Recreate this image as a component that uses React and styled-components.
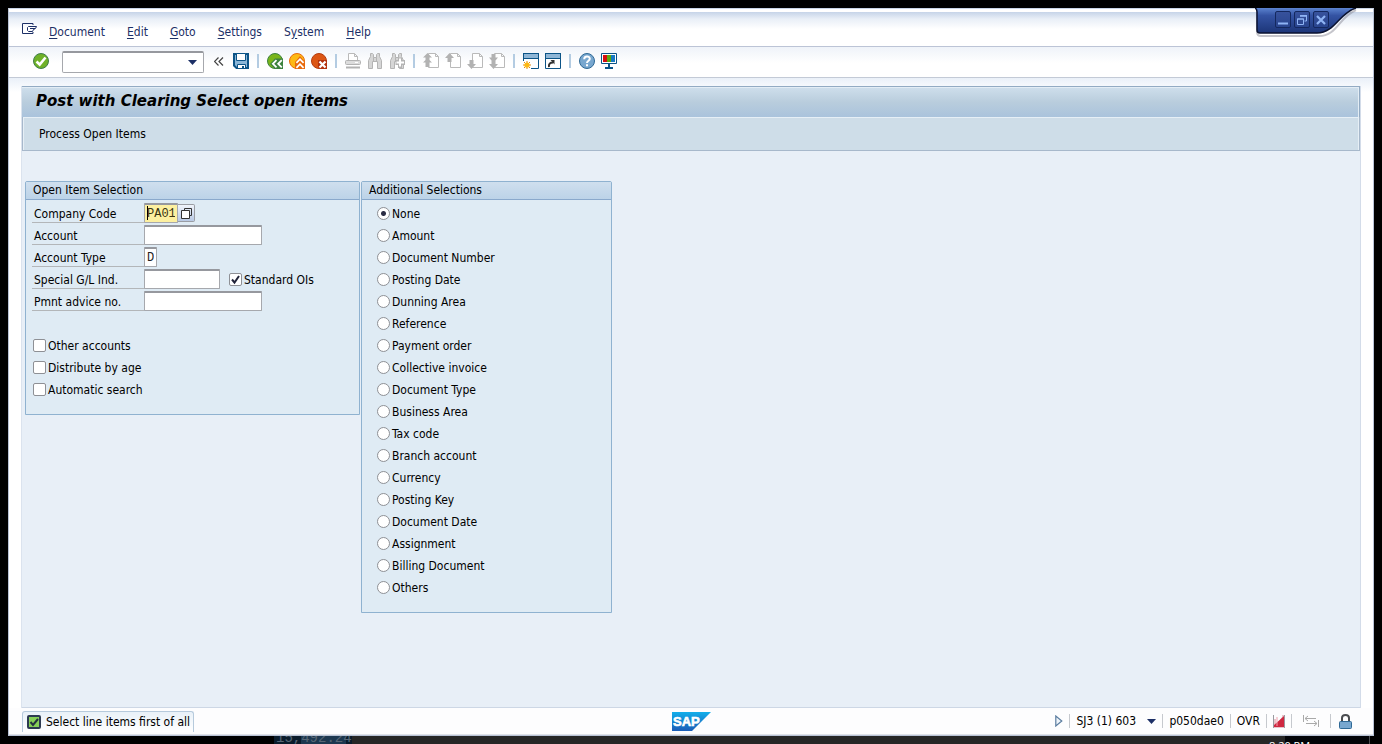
import React from 'react';
import styled, { createGlobalStyle, css } from 'styled-components';

const GlobalStyle = createGlobalStyle`
  *, *::before, *::after { box-sizing: border-box; }
  html, body { margin: 0; padding: 0; background: #000; }
  body, button, input {
    font-family: "DejaVu Sans Condensed", "DejaVu Sans", sans-serif;
    font-size: 12px;
    line-height: 16px;
    color: #000;
  }
`;

const Desktop = styled.div`
  display: flex;
  flex-direction: column;
  min-height: 100vh;
  padding: 8px 8px 0;
`;

const Window = styled.div`
  position: relative;
  flex: 1;
  display: flex;
  flex-direction: column;
  background: #fff;
  border: 1px solid #b9c3d6;
  border-top-color: #c9d4e6;
`;

const WindowControls = styled.div`
  position: absolute;
  top: -1px;
  right: 14px;
  width: 104px;
  height: 30px;
`;

const ControlsShape = styled.svg`
  position: absolute;
  inset: 0;
`;

const ControlButtons = styled.div`
  position: relative;
  display: flex;
  gap: 3px;
  padding: 3px 0 0 20px;
`;

const PlainButton = styled.button`
  display: flex;
  align-items: center;
  justify-content: center;
  padding: 0;
  border: 0;
  background: none;
`;

const ControlButton = styled(PlainButton)`
  width: 16px;
  height: 17px;
  border: 1px solid #14285f;
  border-radius: 2px;
  background: linear-gradient(#37529c, #29458f);
`;

const MenuBar = styled.nav`
  display: flex;
  align-items: center;
  gap: 22px;
  height: 38px;
  padding: 8px 13px 0;
  border-bottom: 1px solid #bcc4d6;
  background: linear-gradient(#fff 0 3px, #c6d4e8 3px, #e9eff7 10px, #fff 20px);
`;

const MenuIcon = styled(PlainButton)`
  width: 15px;
  height: 18px;
  margin-right: -10px;
  align-items: flex-start;
`;

const MenuItem = styled.a`
  color: #1c2f66;
  text-decoration: none;
  u { text-underline-offset: 2px; }
`;

const Toolbar = styled.div`
  display: flex;
  align-items: center;
  gap: 6px;
  height: 31px;
  padding: 0 24px 2px;
  border-bottom: 1px solid #c3cad6;
  background: linear-gradient(#eff3f9, #fff 16px);
`;

const IconButton = styled(PlainButton)`
  flex: none;
  width: 16px;
  height: 16px;
`;

const ToolSeparator = styled.span`
  width: 6px;
  height: 14px;
  background: linear-gradient(#b4cce2, #b4cce2) center / 2px 100% no-repeat;
`;

const CommandField = styled.div`
  display: flex;
  align-items: center;
  width: 142px;
  height: 22px;
  margin: 2px 4px 0 7px;
  padding-right: 6px;
  border: 1px solid #a6a8ad;
  border-top: 2px solid #96989e;
  border-radius: 2px;
  background: #fff;
`;

const CommandInput = styled.input`
  flex: 1;
  min-width: 0;
  border: 0;
  padding: 0 4px;
  outline: 0;
  background: none;
`;

const Collapse = styled(IconButton)`
  width: 10px;
  margin-right: 3px;
`;

const Client = styled.div`
  flex: 1;
  display: flex;
  flex-direction: column;
  padding: 0 13px;
  background: linear-gradient(#eaf0f8, #fff 14px);
`;

const Screen = styled.main`
  flex: 1;
  display: flex;
  flex-direction: column;
  margin-top: 8px;
  border-bottom: 1px solid #cdd7e5;
  background: #e8eff7;
  box-shadow: -1px 0 #dbe3ee, 1px 0 #d3dce9;
`;

const TitleBar = styled.h1`
  margin: 0;
  height: 31px;
  padding: 2px 14px 0;
  border: 1px solid #93abc3;
  border-width: 1px 1px 0 0;
  background: linear-gradient(#cfdfec, #b9cddd 50%, #aac3dc);
  box-shadow: inset -1px 1px #e3edf5;
  font-family: "DejaVu Sans", sans-serif;
  font-size: 15px;
  line-height: 24px;
  font-weight: bold;
  font-style: italic;
`;

const AppToolbar = styled.div`
  display: flex;
  align-items: center;
  height: 34px;
  padding: 0 16px;
  border: 1px solid #a7b8cb;
  border-top: 0;
  background: #cedde8;
  box-shadow: inset 1px 1px #e6eff6, inset -1px 0 #e6eff6;
`;

const Groups = styled.div`
  display: flex;
  align-items: flex-start;
  gap: 1px;
  padding: 30px 3px;
`;

const Group = styled.fieldset`
  width: ${(p) => p.$width}px;
  margin: 0;
  padding: 0 0 14px;
  border: 1px solid #8fb2d0;
  border-radius: 2px 2px 0 0;
  background: #dfebf4;
`;

const GroupTitle = styled.legend`
  float: left;
  width: 100%;
  height: 18px;
  margin-bottom: 2px;
  padding: 0 7px;
  border-bottom: 1px solid #8aa9cc;
  background: linear-gradient(#cfdfee, #bcd3e8);
`;

const GroupRows = styled.div`
  clear: both;
  padding-left: ${(p) => p.$indent}px;
`;

const Row = styled.div`
  display: flex;
  align-items: center;
  height: 22px;
`;

const FieldLabel = styled.label`
  width: 112px;
  height: 20px;
  padding: 3px 2px 0;
  border-bottom: 1px solid #b3b6b9;
`;

const FieldBox = styled.span`
  position: relative;
  display: flex;
`;

const Field = styled.input`
  width: ${(p) => p.$width}px;
  height: 20px;
  padding: 0 2px;
  border: 1px solid #a6a8ad;
  border-top: 2px solid #96989e;
  border-radius: 1px;
  outline: 0;
  background: ${(p) => (p.$active ? '#fdf0a0' : '#fff')};
  color: ${(p) => (p.$active ? '#3a3410' : '#222')};
  font-family: "Liberation Mono", monospace;
`;

const Caret = styled.span`
  position: absolute;
  left: 3px;
  top: 3px;
  width: 1px;
  height: 14px;
  background: #000;
`;

const SearchHelp = styled(PlainButton)`
  width: 17px;
  height: 18px;
  border: 1px solid #9a9da4;
  border-left: 0;
  border-radius: 0 2px 2px 0;
  background: linear-gradient(#f0f4fb, #b9c9e4);
`;

const choice = css`
  appearance: none;
  flex: none;
  width: 13px;
  height: 13px;
  margin: 0;
  border: 1px solid #8e9095;
  background: #fff;
`;

const Checkbox = styled.input.attrs({ type: 'checkbox' })`
  ${choice}
  border-radius: 2px;
  &:checked {
    background: #fff url("data:image/svg+xml,%3Csvg xmlns='http://www.w3.org/2000/svg' viewBox='0 0 11 11'%3E%3Cpath d='M2 5.5L4.5 8.5L9 2' fill='none' stroke='%2322243a' stroke-width='2'/%3E%3C/svg%3E");
  }
`;

const Radio = styled.input.attrs({ type: 'radio' })`
  ${choice}
  border-radius: 50%;
  &:checked { background: radial-gradient(circle, #2b2d45 0 2px, #fff 3px); }
`;

const ChoiceLabel = styled.label`
  display: flex;
  align-items: center;
  gap: 2px;
  height: 22px;
  padding-top: 1px;
  white-space: nowrap;
`;

const InlineChoice = styled.div`
  margin-left: 9px;
`;

const OptionList = styled.div`
  padding-left: 1px;
`;

const StatusBar = styled.footer`
  display: grid;
  grid-template-columns: 1fr auto 1fr;
  align-items: center;
  height: 27px;
  padding: 0 13px;
  border-bottom: 1px solid #dfe2e8;
  background: #fdfdfe;
`;

const Message = styled.div`
  justify-self: start;
  display: flex;
  align-items: center;
  gap: 5px;
  height: 21px;
  padding: 0 3px 0 4px;
  border: 1px solid #b6cadc;
  border-bottom: 0;
  border-radius: 3px 3px 0 0;
  background: linear-gradient(#e9f1f8, #fff);
`;

const SystemInfo = styled.div`
  justify-self: end;
  display: flex;
  align-items: center;
  gap: 6px;
  height: 20px;
  margin-right: 7px;
`;

const InfoSeparator = styled.span`
  width: 1px;
  height: 14px;
  background: #c6c9ce;
`;

const SystemButton = styled(PlainButton)`
  justify-content: space-between;
  width: 80px;
`;

const InfoSlot = styled.span`
  display: flex;
  justify-content: center;
  width: ${(p) => p.$width}px;
`;

const Taskbar = styled.div`
  display: flex;
  height: 8px;
  margin: 0 4px 0 266px;
  overflow: hidden;
  border-right: 1px solid #4a4c50;
  background: #020408;
`;

const TaskAmount = styled.span`
  width: 78px;
  padding-left: 2px;
  background: linear-gradient(90deg, #0a1c2c 27px, #1d3850 27px 72px, #0a1c2c 72px);
  color: #566675;
  font: 14px/4px "Liberation Mono", monospace;
`;

const TaskStrip = styled.span`
  flex: 1;
  background: #262626;
`;

const TaskClock = styled.span`
  width: 100px;
  margin-left: -16px;
  color: #fff;
  font: 11px/20px "Open Sans", sans-serif;
`;

const Svg = ({ w = 16, h = 16, children }) => (
  <svg width={w} height={h} viewBox={`0 0 ${w} ${h}`} fill="none" aria-hidden="true">{children}</svg>
);

const Triangle = () => <Svg w={9} h={5}><path d="M0 0h9L4.500 5z" fill="#1c2f66" /></Svg>;

const CheckIcon = () => (
  <Svg>
    <circle cx="8" cy="8" r="7.500" fill="#6fb128" stroke="#3f7d4c" />
    <path d="M3.500 8.500l3.200 3L12.500 4.500" stroke="#fff" strokeWidth="2.600" />
  </Svg>
);

const SaveIcon = () => (
  <Svg>
    <path d="M1 1h14v14H3.500L1 12.500z" fill="#8ab6d8" stroke="#0c5487" strokeWidth="2" />
    <path d="M3.500.500h9v7h-9z" fill="#fff" stroke="#0c5487" />
    <path d="M4.500 11.500h8V16h-8z" fill="#fff" stroke="#0c5487" />
    <path d="M4 15.500h9" stroke="#0c5487" />
    <path d="M9 13h2v3H9z" fill="#0c5487" />
  </Svg>
);

const BackIcon = () => (
  <Svg>
    <circle cx="8" cy="8" r="7.500" fill="#79b51c" stroke="#3d823e" />
    <path d="M3 11l5-5.500h8V16H8z" fill="#3d823e" />
    <path d="M9.500 7.200l-3.600 3.600 3.600 3.600M14.800 7.200l-3.600 3.600 3.600 3.600" stroke="#fff" strokeWidth="1.800" />
  </Svg>
);

const ExitIcon = () => (
  <Svg>
    <circle cx="8" cy="8" r="7.500" fill="#fdb913" stroke="#e8690b" />
    <path d="M6 9l5-6 5 6v7H6z" fill="#e8690b" />
    <path d="M7.400 9.800L11 6.200l3.600 3.600M7.400 14.800l3.600-3.600 3.600 3.600" stroke="#fff" strokeWidth="1.800" />
  </Svg>
);

const CancelIcon = () => (
  <Svg>
    <circle cx="8" cy="8" r="7.500" fill="#dc5613" stroke="#b33c0f" />
    <path d="M7 7h9v9H9l-2-2z" fill="#b3320d" />
    <path d="M8.500 8.500l6 6M14.500 8.500l-6 6" stroke="#fff" strokeWidth="2.200" />
  </Svg>
);

const PrintIcon = () => (
  <Svg>
    <path d="M3.500 7V.500h6l3 3V7M9.500.500v3h3" fill="#fff" stroke="#bababa" />
    <rect x=".5" y="7.500" width="15" height="4" rx="1" fill="#dcdcdc" stroke="#b2b2b2" />
    <path d="M10 9.500h3" stroke="#fff" />
    <path d="M1 14.500h14" stroke="#b2b2b2" strokeWidth="2" />
  </Svg>
);

const FindIcon = ({ next }) => (
  <Svg>
    <path d="M3.500.500h2l1 1v3h3v-3l1-1h2v3l2 4v8h-4v-7h-5v7h-4v-8l2-4z" fill="#d6d6d6" stroke="#b4b4b4" />
    <path d="M6.500 4.500v4M9.500 4.500v4" stroke="#b4b4b4" />
    {next && (
      <>
        <path d="M9 4.500h4v2.500h3v5h-3v3H9v-3H6.500V7H9z" fill="#b4b4b4" />
        <path d="M11 5.500v8M7.500 9.500h7.500" stroke="#fff" strokeWidth="2" />
      </>
    )}
  </Svg>
);

const PageIcon = ({ arrows }) => (
  <Svg>
    <path d="M5.500.500h7l3 3v11h-10zM12.500.500v3h3" fill="#fff" stroke="#bababa" />
    {arrows === 'first' && <path d="M4.500 0L9 4.500H6.500V7L9 9.500H6.500V14h-4V9.500H0L2.500 7V4.500H0z" fill="#b2b2b2" />}
    {arrows === 'prev' && <path d="M4.500 0L9 5H6.500v4h-4V5H0z" fill="#b2b2b2" />}
    {arrows === 'next' && <path d="M4.500 16L0 11h2.500V7h4v4H9z" fill="#b2b2b2" />}
    {arrows === 'last' && <path d="M2.500 1h4v3.500H9L6.500 7.500V11H9l-4.500 5L0 11h2.500V7.500L0 4.500h2.500z" fill="#b2b2b2" />}
  </Svg>
);

const SessionIcon = ({ shortcut }) => (
  <Svg>
    <path d="M.5.500h15v15H.500z" fill="#fff" stroke="#0c5487" />
    <path d="M1 1h14v4H1z" fill="#8fb6d6" />
    <path d="M0 5.500h16M0 .500h16" stroke="#0c5487" />
    {shortcut ? (
      <>
        <path d="M4 14c-.500-3 1-4.500 4-4.500" stroke="#333" strokeWidth="2" />
        <path d="M5.500 7H9.500v4.500z" fill="#333" />
      </>
    ) : (
      <>
        <path d="M0 8h8v8H0z" fill="#fff" />
        <path d="M4 8v8M0 12h8M1 9l6 6M7 9l-6 6" stroke="#e58a0d" />
        <circle cx="4" cy="12" r="2.600" fill="#fdb913" />
      </>
    )}
  </Svg>
);

const HelpIcon = () => (
  <Svg>
    <circle cx="8" cy="8" r="7.500" fill="#78a7cf" stroke="#2f6996" />
    <path d="M5.200 6.200c0-3.600 5.600-3.600 5.600-.400C10.800 7.800 8 7.800 8 10M8 11.300v2" stroke="#fff" strokeWidth="2" />
  </Svg>
);

const LayoutIcon = () => (
  <Svg>
    <path d="M.5.500h15v10H.500z" fill="#fff" stroke="#0c5487" />
    <path d="M2 2h4v7H2z" fill="#d50f10" />
    <path d="M6 2h4v7H6z" fill="#5fa80f" />
    <path d="M10 2h4v7h-4z" fill="#1779c4" />
    <path d="M7 11h2v3H7zM4 14h8v2H4z" fill="#0c5487" />
  </Svg>
);

const toolGroups = [
  [['Back', <BackIcon />], ['Exit', <ExitIcon />], ['Cancel', <CancelIcon />]],
  [['Print', <PrintIcon />], ['Find', <FindIcon />], ['Find next', <FindIcon next />]],
  [
    ['First page', <PageIcon arrows="first" />],
    ['Previous page', <PageIcon arrows="prev" />],
    ['Next page', <PageIcon arrows="next" />],
    ['Last page', <PageIcon arrows="last" />],
  ],
  [['New session', <SessionIcon />], ['Create shortcut', <SessionIcon shortcut />]],
  [['Help', <HelpIcon />], ['Customize layout', <LayoutIcon />]],
];

const menus = [
  ['', 'D', 'ocument'],
  ['', 'E', 'dit'],
  ['', 'G', 'oto'],
  ['', 'S', 'ettings'],
  ['S', 'y', 'stem'],
  ['', 'H', 'elp'],
];

const fields = [
  { id: 'company', label: 'Company Code', width: 34, value: 'PA01', active: true },
  { id: 'account', label: 'Account', width: 118 },
  { id: 'type', label: 'Account Type', width: 13, value: 'D' },
  { id: 'special', label: 'Special G/L Ind.', width: 76, standard: true },
  { id: 'advice', label: 'Pmnt advice no.', width: 118 },
];

const options = ['Other accounts', 'Distribute by age', 'Automatic search'];

const selections = [
  'None', 'Amount', 'Document Number', 'Posting Date', 'Dunning Area', 'Reference',
  'Payment order', 'Collective invoice', 'Document Type', 'Business Area', 'Tax code',
  'Branch account', 'Currency', 'Posting Key', 'Document Date', 'Assignment',
  'Billing Document', 'Others',
];

export default function App() {
  return (
    <Desktop>
      <GlobalStyle />
      <Window>
        <MenuBar>
          <MenuIcon aria-label="Window menu">
            <Svg w={15} h={12}>
              <path d="M11 2V.500H.500v10H11V9" stroke="#1c2f66" />
              <path d="M14.500 3.500h-8l-1 1v3l1 1h4l1-2 2-1z" fill="#fff" stroke="#1c2f66" />
              <path d="M8 5.500h5" stroke="#1c2f66" />
            </Svg>
          </MenuIcon>
          {menus.map(([before, key, after]) => (
            <MenuItem key={key} href="#">{before}<u>{key}</u>{after}</MenuItem>
          ))}
        </MenuBar>

        <Toolbar>
          <IconButton aria-label="Enter"><CheckIcon /></IconButton>
          <CommandField>
            <CommandInput aria-label="Command" />
            <PlainButton aria-label="Command history"><Triangle /></PlainButton>
          </CommandField>
          <Collapse aria-label="Collapse command field">
            <Svg w={10} h={9}>
              <path d="M4.500.500l-4 4 4 4M9 .500l-4 4 4 4" stroke="#444" strokeWidth="1.200" />
            </Svg>
          </Collapse>
          <IconButton aria-label="Save"><SaveIcon /></IconButton>
          {toolGroups.map((group, i) => (
            <React.Fragment key={i}>
              <ToolSeparator />
              {group.map(([name, icon]) => <IconButton key={name} aria-label={name}>{icon}</IconButton>)}
            </React.Fragment>
          ))}
        </Toolbar>

        <Client>
          <Screen>
            <TitleBar>Post with Clearing Select open items</TitleBar>
            <AppToolbar>
              <PlainButton>Process Open Items</PlainButton>
            </AppToolbar>
            <Groups>
              <Group $width={335}>
                <GroupTitle>Open Item Selection</GroupTitle>
                <GroupRows $indent={6}>
                  {fields.map((f) => (
                    <Row key={f.id}>
                      <FieldLabel htmlFor={f.id}>{f.label}</FieldLabel>
                      <FieldBox>
                        <Field id={f.id} $width={f.width} $active={f.active} defaultValue={f.value} />
                        {f.active && <Caret />}
                      </FieldBox>
                      {f.active && (
                        <SearchHelp aria-label="Possible entries">
                          <Svg w={11} h={11}>
                            <path d="M3.500 2.500v-2h7v7h-2" stroke="#333" />
                            <path d="M.500 2.500h8v8h-8z" fill="#fff" stroke="#333" />
                          </Svg>
                        </SearchHelp>
                      )}
                      {f.standard && (
                        <InlineChoice>
                          <ChoiceLabel><Checkbox defaultChecked />Standard OIs</ChoiceLabel>
                        </InlineChoice>
                      )}
                    </Row>
                  ))}
                  <Row />
                  <OptionList>
                    {options.map((o) => (
                      <ChoiceLabel key={o}><Checkbox />{o}</ChoiceLabel>
                    ))}
                  </OptionList>
                </GroupRows>
              </Group>
              <Group $width={251}>
                <GroupTitle>Additional Selections</GroupTitle>
                <GroupRows $indent={15}>
                  {selections.map((s, i) => (
                    <ChoiceLabel key={s}><Radio name="selection" defaultChecked={i === 0} />{s}</ChoiceLabel>
                  ))}
                </GroupRows>
              </Group>
            </Groups>
          </Screen>
        </Client>

        <StatusBar>
          <Message role="status">
            <Svg w={14} h={14}>
              <rect x="1" y="1" width="12" height="12" rx="1" fill="#86cf58" stroke="#2c3a50" strokeWidth="2" />
              <path d="M3.500 7l2.500 3 5-6" stroke="#24323f" strokeWidth="2" />
            </Svg>
            Select line items first of all
          </Message>
          <svg width="39" height="19" viewBox="0 0 39 19" role="img" aria-label="SAP">
            <defs>
              <linearGradient id="sap" x2="0" y2="1">
                <stop offset="0" stopColor="#12aeea" />
                <stop offset="1" stopColor="#1a5cb8" />
              </linearGradient>
            </defs>
            <path d="M0 0h39L20 19H0z" fill="url(#sap)" />
            <text x="1" y="14" fill="#fff" stroke="#fff" strokeWidth=".6" fontFamily="Liberation Sans, sans-serif" fontWeight="bold" fontSize="13">SAP</text>
          </svg>
          <SystemInfo>
            <Svg w={8} h={12}>
              <path d="M.8 1v10l6-5z" fill="#eef4fa" stroke="#5c7ea0" strokeWidth="1.200" />
            </Svg>
            <InfoSeparator />
            <SystemButton>SJ3 (1) 603 <Triangle /></SystemButton>
            <InfoSeparator />
            <span>p050dae0</span>
            <InfoSeparator />
            <span>OVR</span>
            <InfoSeparator />
            <InfoSlot $width={12}>
              <Svg w={12} h={13}>
                <path d="M0 4h3v7L9 2V0h3v13H0z" fill="#e9c3ca" />
                <path d="M0 11L11 1v11H0z" fill="#cf2740" />
                <path d="M.5 0v13M11.500 0v13" stroke="#9a9aa0" />
                <path d="M4 2v9" stroke="#f0a0ac" />
              </Svg>
            </InfoSlot>
            <InfoSeparator />
            <InfoSlot $width={26}>
              <Svg w={16} h={12}>
                <path d="M.5 0v7M2 3.500h11M5 1L2 3.500 5 6M15.500 5v7M3 8.500h11M11 6l3 2.500-3 2.500" stroke="#a9a9a9" />
              </Svg>
            </InfoSlot>
            <InfoSeparator />
            <InfoSlot $width={16}>
              <Svg w={13} h={15}>
                <path d="M3 8V4c0-4 7-4 7 0v4" stroke="#4a4c50" strokeWidth="2" />
                <rect x=".5" y="7.500" width="12" height="7" rx="1" fill="#78a7cf" stroke="#2f6996" />
              </Svg>
            </InfoSlot>
          </SystemInfo>
        </StatusBar>

        <WindowControls>
          <ControlsShape width="104" height="30" viewBox="0 0 104 30" aria-hidden="true">
            <defs>
              <linearGradient id="controls" x2="0" y2="1">
                <stop offset="0" stopColor="#5b83cf" />
                <stop offset=".3" stopColor="#3453a3" />
                <stop offset="1" stopColor="#1c3577" />
              </linearGradient>
            </defs>
            <path d="M2 4v20q0 4 4 4h58c18 0 20-19 37-26" fill="none" stroke="#8b8b98" strokeOpacity=".5" strokeWidth="2" />
            <path d="M0 0q2 1 2 4v18q0 3 3 3h57C80 25 84 5 101 0z" fill="url(#controls)" />
            <path d="M0 0q2 1 2 4v18q0 3 3 3h57C80 25 84 5 101 0" fill="none" stroke="#0a1230" strokeWidth="1.500" />
          </ControlsShape>
          <ControlButtons>
            <ControlButton aria-label="Minimize">
              <Svg w={10} h={10}><path d="M0 8.500h10" stroke="#8fb4f5" strokeWidth="2" /></Svg>
            </ControlButton>
            <ControlButton aria-label="Restore">
              <Svg w={10} h={10}>
                <path d="M3 1h6.500v5H7.500" stroke="#8fb4f5" />
                <path d="M3 .800h7" stroke="#8fb4f5" strokeWidth="1.600" />
                <path d="M.5 4h6v5.500h-6zM0 4h7" stroke="#8fb4f5" />
              </Svg>
            </ControlButton>
            <ControlButton aria-label="Close">
              <Svg w={10} h={10}><path d="M1 1l8 8M9 1L1 9" stroke="#8fb4f5" strokeWidth="2.200" /></Svg>
            </ControlButton>
          </ControlButtons>
        </WindowControls>
      </Window>

      <Taskbar>
        <TaskAmount>15,492.24</TaskAmount>
        <TaskStrip />
        <TaskClock>8:20 PM</TaskClock>
      </Taskbar>
    </Desktop>
  );
}
